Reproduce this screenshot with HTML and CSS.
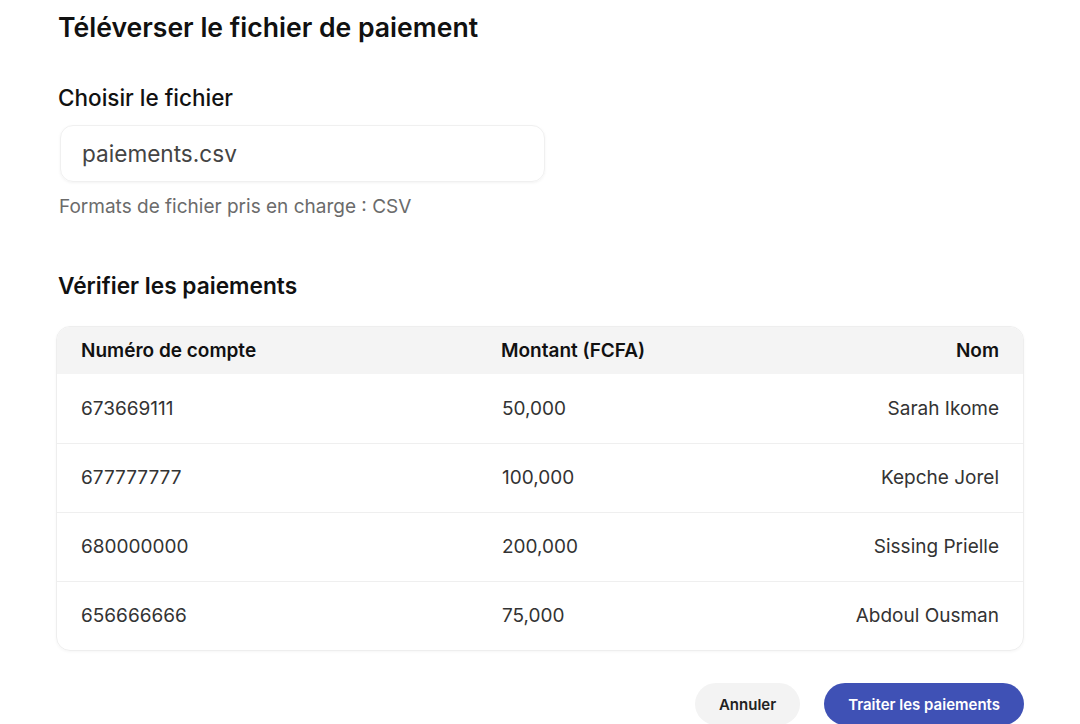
FILE: index.html
```html
<!DOCTYPE html>
<html lang="fr">
<head>
  <meta charset="UTF-8" />
  <meta name="viewport" content="width=device-width, initial-scale=1.0"/>
  <title>Téléverser le fichier de paiement</title>
  <link rel="stylesheet" href="styles.css">
</head>
<body>
  <div class="page">
    <h1>Téléverser le fichier de paiement</h1>

    <section class="upload">
      <label class="label">Choisir le fichier</label>
      <div class="file-box">paiements.csv</div>
      <p class="hint">Formats de fichier pris en charge : CSV</p>
    </section>

    <h2>Vérifier les paiements</h2>
    <div class="table-card">
      <table>
        <thead>
          <tr>
            <th class="col-acc">Numéro de compte</th>
            <th class="col-amt">Montant (FCFA)</th>
            <th class="col-name">Nom</th>
          </tr>
        </thead>
        <tbody>
          <tr><td>673669111</td><td class="amt">50,000</td><td class="name">Sarah Ikome</td></tr>
          <tr><td>677777777</td><td class="amt">100,000</td><td class="name">Kepche Jorel</td></tr>
          <tr><td>680000000</td><td class="amt">200,000</td><td class="name">Sissing Prielle</td></tr>
          <tr><td>656666666</td><td class="amt">75,000</td><td class="name">Abdoul Ousman</td></tr>
        </tbody>
      </table>
    </div>

    <div class="actions">
      <button class="btn btn-cancel">Annuler</button>
      <button class="btn btn-primary">Traiter les paiements</button>
    </div>
  </div>
</body>
</html>
```

FILE: styles.css
```css
body {
  margin: 0;
  font-family: Inter, "Noto Sans", sans-serif;
  background: #fff;
  color: #111;
}
.page {
  padding: 10px 56px 0 58px;
}
h1 {
  margin: 0;
  font-size: 26.6px;
  font-weight: 600;
  line-height: 34px;
}
.upload {
  margin-top: 40px;
}
.label {
  display: block;
  font-size: 22.5px;
  font-weight: 500;
  line-height: 28px;
}
.file-box {
  margin: 13px 0 0 2px;
  width: 462px;
  height: 55px;
  line-height: 55px;
  padding-left: 21px;
  border: 1px solid #f0f0f0;
  border-radius: 13px;
  box-shadow: 0 1px 3px rgba(0,0,0,0.05);
  font-size: 22.6px;
  color: #444;
}
.hint {
  margin: 13px 0 0 1px;
  font-size: 19px;
  line-height: 23px;
  color: #6b6b6b;
}
h2 {
  margin: 53px 0 0;
  font-size: 22.7px;
  font-weight: 600;
  line-height: 30px;
}
.table-card {
  margin: 25px 0 0 -2px;
  width: 966px;
  border: 1px solid #eeeeee;
  border-radius: 14px;
  overflow: hidden;
  box-shadow: 0 1px 3px rgba(0,0,0,0.04);
}
table {
  width: 100%;
  border-collapse: collapse;
  table-layout: fixed;
}
th, td {
  box-sizing: border-box;
  padding: 0 24px;
  text-align: left;
  font-size: 19px;
}
th {
  background: #f4f4f4;
  height: 47px;
  font-weight: 600;
  color: #111;
}
td {
  height: 69px;
  color: #333;
  border-top: 1px solid #efefef;
}
tbody tr:first-child td { border-top: none; }
.col-acc { width: 420px; }
.col-amt { width: 260px; }
.col-name, .name { text-align: right; }
.amt { padding-left: 25px; }
.actions {
  display: flex;
  justify-content: flex-end;
  gap: 24px;
  margin-top: 32px;
  width: 966px;
}
.btn {
  border: none;
  border-radius: 22px;
  height: 42px;
  padding: 0 24px;
  font-family: inherit;
  font-size: 15px;
  font-weight: 600;
}
.btn-cancel {
  background: #f3f3f3;
  color: #222;
}
.btn-primary {
  background: #3f51b5;
  color: #fff;
}
```
